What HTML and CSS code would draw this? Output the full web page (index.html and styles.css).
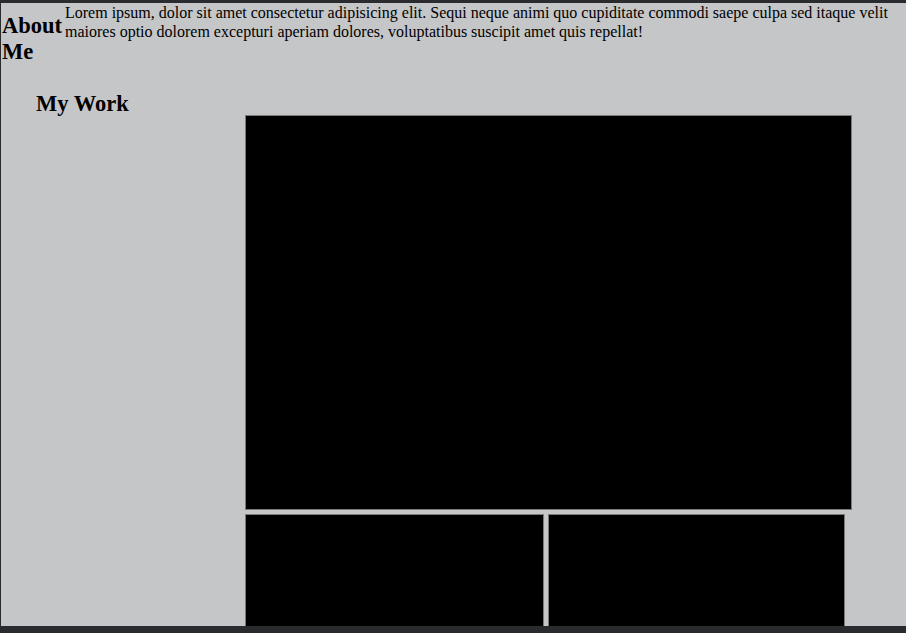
FILE: index.html
```
<!DOCTYPE html>
<html>
<head>
<meta charset="utf-8">
<link rel="stylesheet" href="styles.css">
</head>
<body>
<div class="page">
  <header class="about">
    <h2 class="about-title">About Me</h2>
    <p class="about-text">Lorem ipsum, dolor sit amet consectetur adipisicing elit. Sequi neque animi quo cupiditate commodi saepe culpa sed itaque velit maiores optio dolorem excepturi aperiam dolores, voluptatibus suscipit amet quis repellat!</p>
  </header>
  <section class="work">
    <h2 class="work-title">My Work</h2>
    <div class="gallery">
      <div class="shot shot-big"></div>
      <div class="row">
        <div class="shot shot-a"></div>
        <div class="shot shot-b"></div>
      </div>
    </div>
  </section>
</div>
</body>
</html>
```
FILE: styles.css
```
html, body {
  margin: 0;
  padding: 0;
  background: #2a2b2f;
}
.page {
  margin: 3px 0 0 1px;
  height: 623px;
  overflow: hidden;
  background: #c5c6c8;
  font-family: "Liberation Serif", "Times New Roman", serif;
  color: #000;
}
.about {
  display: flex;
  align-items: flex-start;
}
.about-title {
  margin: 10px 1px 0 1px;
  width: 62px;
  flex: none;
  font-size: 22.5px;
  line-height: 26px;
  font-weight: bold;
}
.about-text {
  margin: 0;
  flex: 1;
  font-size: 16px;
  line-height: 19px;
}
.work {
  padding-left: 35px;
}
.work-title {
  margin: 26px 0 0;
  font-size: 22.5px;
  line-height: 26px;
}
.gallery {
  margin: -2px 0 0 209px;
  display: flex;
  flex-direction: column;
  gap: 4px;
}
.row {
  display: flex;
  gap: 4px;
}
.shot {
  background: #000;
  border: 1px solid #7a7a7a;
  box-sizing: border-box;
}
.shot-big {
  width: 607px;
  height: 395px;
}
.shot-a {
  width: 299px;
  height: 200px;
}
.shot-b {
  width: 297px;
  height: 200px;
}
```
